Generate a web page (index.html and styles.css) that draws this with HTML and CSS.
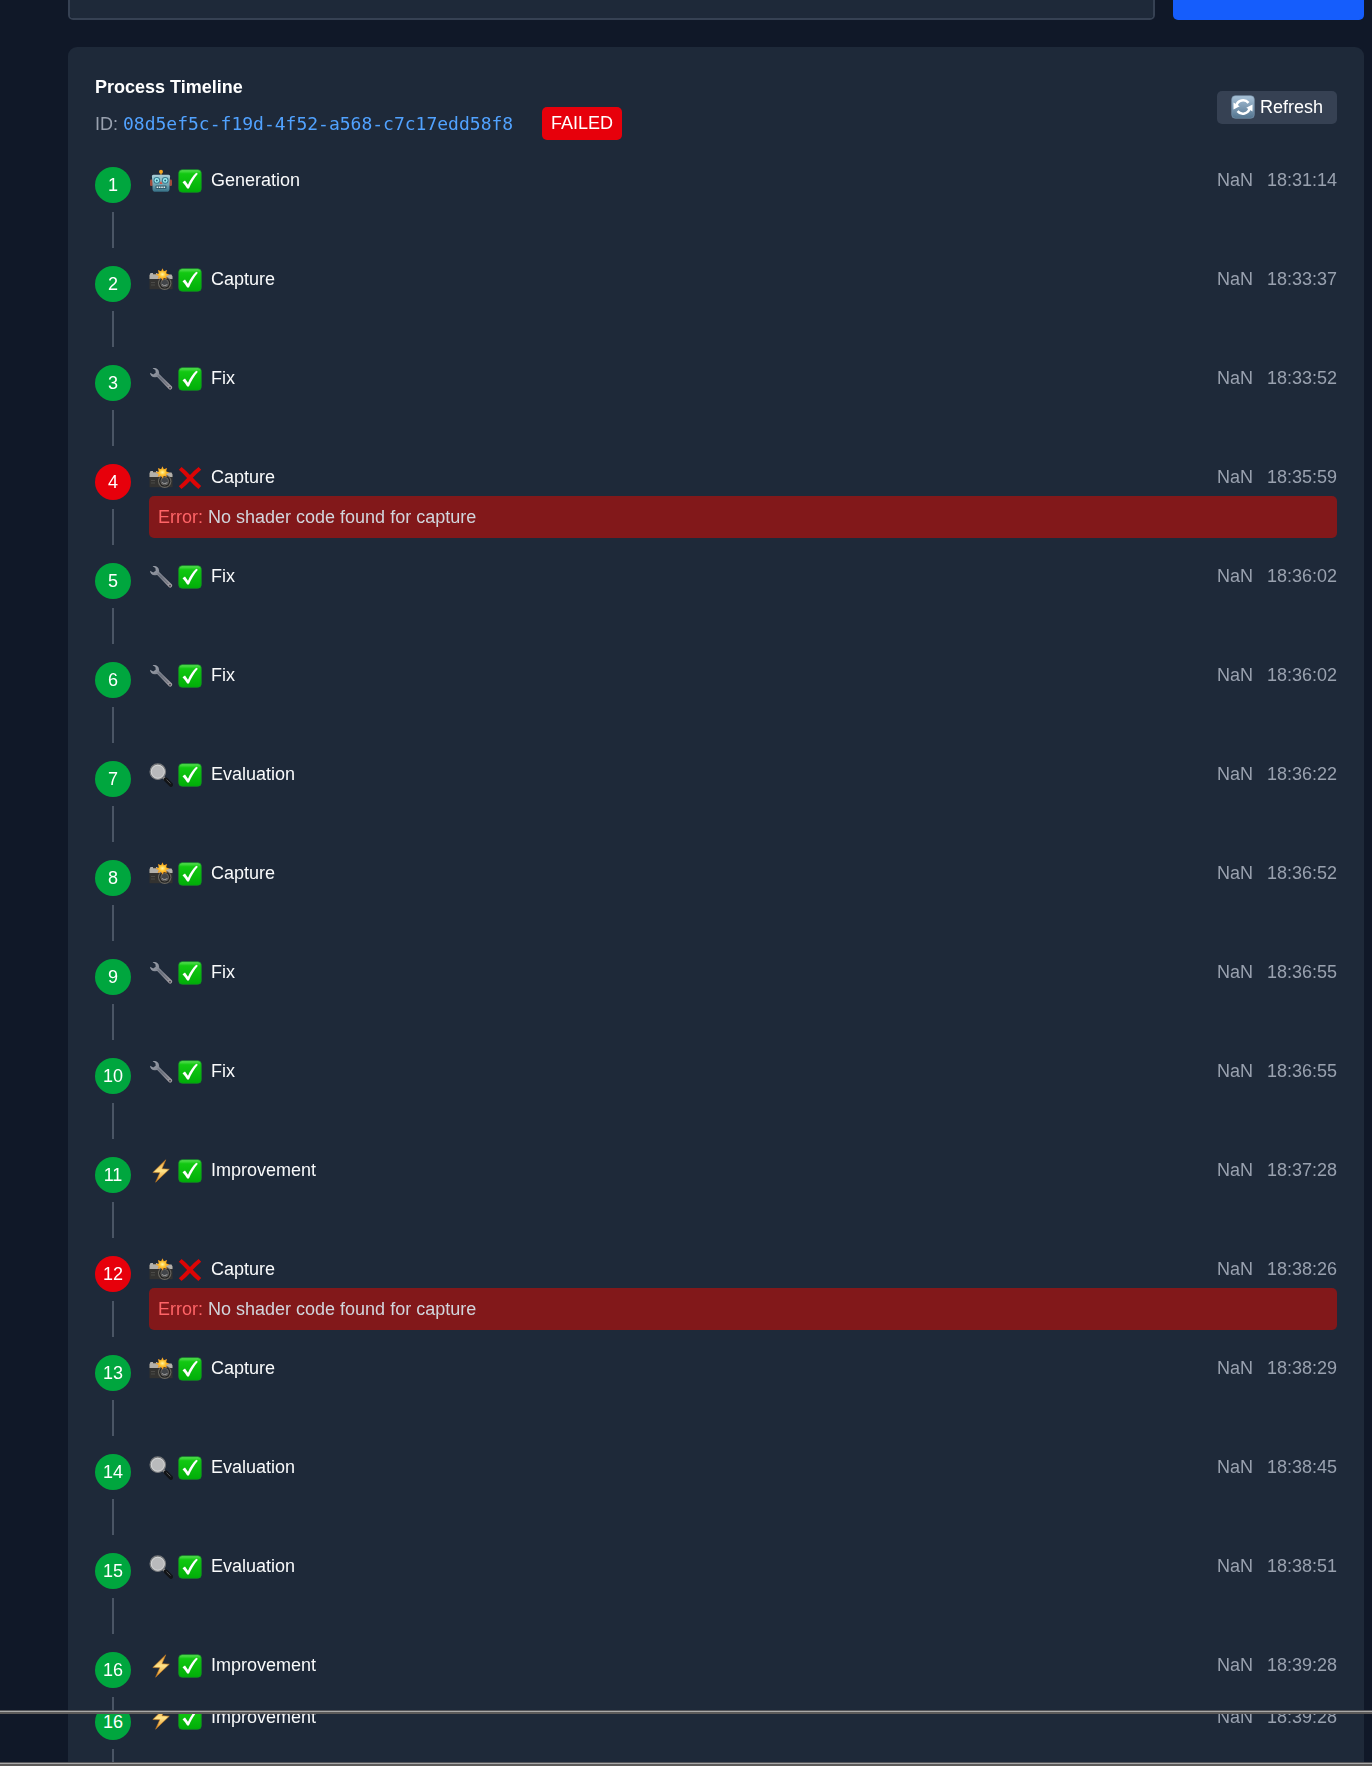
FILE: index.html
```html
<!DOCTYPE html>
<html lang="en">
<head>
<meta charset="utf-8">
<meta name="viewport" content="width=device-width, initial-scale=1">
<title>Process Timeline</title>
<link rel="stylesheet" href="styles.css">
</head>
<body>
<svg class="sprite" aria-hidden="true">
  <defs>
    <linearGradient id="g-green" x2="0" y2="1"><stop offset="0" stop-color="#5fe35a"/><stop offset=".18" stop-color="#12c812"/><stop offset="1" stop-color="#00ae08"/></linearGradient>
    <linearGradient id="g-blue" x2="0" y2="1"><stop offset="0" stop-color="#a9c2d8"/><stop offset="1" stop-color="#53748f"/></linearGradient>
    <linearGradient id="g-face" x2="0" y2="1"><stop offset="0" stop-color="#a9cdd6"/><stop offset=".6" stop-color="#6ea3b1"/><stop offset="1" stop-color="#356f85"/></linearGradient>
    <linearGradient id="g-bolt" x2="0" y2="1"><stop offset="0" stop-color="#f09a2c"/><stop offset=".5" stop-color="#ffe48a"/><stop offset="1" stop-color="#e58a1c"/></linearGradient>
    <linearGradient id="g-steel" x2="1" y2="1"><stop offset="0" stop-color="#a3a8b2"/><stop offset=".5" stop-color="#777c88"/><stop offset="1" stop-color="#a9a3a8"/></linearGradient>
    <radialGradient id="g-flash"><stop offset="0" stop-color="#fff3a0"/><stop offset=".45" stop-color="#ffc42e"/><stop offset="1" stop-color="#f08a18"/></radialGradient>
  </defs>
  <symbol id="check" viewBox="0 0 24 24">
    <rect x=".7" y=".7" width="22.6" height="22.6" rx="3.6" fill="url(#g-green)" stroke="#129325" stroke-width=".7"/>
    <path d="M4.5 13.2 7 11.5l3 4.2C12 11 14.800 7 18.200 3.800l1.700.9C16.200 9 13.200 13.800 10.900 19.600H9.200C7.900 17.200 6.300 15.100 4.500 13.200z" fill="#fff"/>
  </symbol>
  <symbol id="cross" viewBox="0 0 24 24">
    <path d="M.9 3.700 3.600 1C6.500 3.300 9.300 6 12 8.900 14.700 6 17.500 3.300 20.600 1l2.600 2.700c-3.100 2.500-5.900 5.200-8.400 8.100 2.700 2.800 5.500 5.600 8.400 8.300L20.400 23c-2.900-2.500-5.700-5.200-8.400-8.100-2.700 2.900-5.500 5.600-8.500 8.100L.8 20.200c2.900-2.600 5.700-5.400 8.300-8.300C6.500 9 3.800 6.300.9 3.700z" fill="#dc0505"/>
  </symbol>
  <symbol id="robot" viewBox="0 0 24 24">
    <path d="M12 3v4" stroke="#9c7a3b" stroke-width="1.600"/><circle cx="12" cy="2.700" r="2" fill="#f5a623"/>
    <rect x="1" y="10.500" width="3" height="6.500" rx="1.300" fill="#a34b3c"/><rect x="20" y="10.500" width="3" height="6.500" rx="1.300" fill="#a34b3c"/>
    <path d="M4.500 5.800h15c1 0 1.700.8 1.600 1.800l-.6 7v5.600c0 1.500-1 2.600-2.500 2.600H6c-1.500 0-2.500-1.100-2.500-2.600v-5.600l-.6-7c-.1-1 .6-1.800 1.600-1.800z" fill="url(#g-face)"/>
    <circle cx="7.800" cy="11.400" r="3.300" fill="#38798e"/><circle cx="16.200" cy="11.400" r="3.300" fill="#38798e"/>
    <circle cx="7.800" cy="11.400" r="2.300" fill="#9cf0f7"/><circle cx="16.200" cy="11.400" r="2.300" fill="#9cf0f7"/>
    <circle cx="7.800" cy="11.400" r="1" fill="#265c70"/><circle cx="16.200" cy="11.400" r="1" fill="#265c70"/>
    <path d="m12 12 1.600 3h-3.200z" fill="#d65442"/>
    <rect x="6.500" y="16.500" width="11" height="3.600" rx=".8" fill="#315d6d"/><path d="M7.600 18.300h8.800" stroke="#dbe8ea" stroke-width="1.600" stroke-dasharray="1.600 .7"/>
  </symbol>
  <symbol id="camera" viewBox="0 0 24 24">
    <path d="M.5 7.500 2 5h5l1 1.500h14l1.500 1.500v13.200H.5z" fill="#333230"/>
    <path d="M.5 7.200 1.500 5H4v1.200h3V5h1.500v1.500h14l1 2v2.500H.5z" fill="#b3b0aa"/>
    <path d="M2 14.500h4M2 17h4" stroke="#4b4a47" stroke-width="1"/>
    <circle cx="15.700" cy="15.200" r="6.700" fill="#68665f"/><circle cx="15.700" cy="15.200" r="5.600" fill="#252525"/>
    <circle cx="15.700" cy="15.200" r="3.900" fill="#414448" stroke="#77736b" stroke-width=".7"/><path d="M13 16.500c1.500 1.300 3.800 1.300 5.300 0" stroke="#a7a7a7" fill="none"/>
    <path d="m13.500.3 1.300 3 3.300-1.200-1 3.200 3.300 1.500-3.300 1.300.8 3-3-1.200-1.500 2.500-1.500-2.600-3.200 1.200 1-3-3.200-1.300L9.800 5.400 8.900 2.100l3.200 1.200z" fill="url(#g-flash)"/>
  </symbol>
  <symbol id="wrench" viewBox="0 0 24 24">
    <path d="M1 5.800 4.200 7.400 6.700 5.800 6.400 3 3.600 1.200C6.800.3 9.900 2.200 10.100 5.400l.1 1.600 12.500 12.300c1.600 1.700-.9 4.500-2.700 3L8.200 10.100 6.200 10.300C3.300 10.500 1.100 8.600 1 5.800z" fill="url(#g-steel)"/>
    <path d="m9 8.500 10.500 10.600" stroke="#5e6370" stroke-width="1"/><circle cx="21" cy="20.700" r=".9" fill="#403c43"/>
  </symbol>
  <symbol id="lens" viewBox="0 0 24 24">
    <path d="m14 14 3.500 3.500" stroke="#8e8e8e" stroke-width="2.600"/><path d="m16.800 16.600 5.200 5.200" stroke="#121417" stroke-width="4.200" stroke-linecap="round"/><path d="m17.500 16.600 4 3.900" stroke="#555" stroke-width="1"/>
    <circle cx="8.800" cy="8.700" r="7.700" fill="#b9babc" stroke="#77797c" stroke-width="1.300"/><circle cx="8.800" cy="8.700" r="6.500" fill="none" stroke="#d9dadb" stroke-width=".8"/>
  </symbol>
  <symbol id="bolt" viewBox="0 0 24 24">
    <path d="M16.800.8 3.800 13.500l7 .3L6.600 23.200 20.300 10.200l-7.300-.5z" fill="url(#g-bolt)" stroke="#c17a22" stroke-width=".6"/>
  </symbol>
  <symbol id="refresh" viewBox="0 0 24 24">
    <rect x=".7" y=".7" width="22.600" height="22.600" rx="3.600" fill="url(#g-blue)" stroke="#7e99b0" stroke-width=".6"/>
    <path d="M5.300 10.700A7 7 0 0 1 17.500 7.900M18.700 13.300A7 7 0 0 1 6.500 16.100" fill="none" stroke="#fff" stroke-width="2.500"/>
    <path d="M2.500 7.500v7l6.200-3.200zM21.500 16.500v-7l-6.200 3.200z" fill="#fff"/>
  </symbol>
</svg>

<main class="pane">
  <form class="prompt">
    <textarea class="prompt-text" aria-label="Prompt"></textarea>
    <button class="prompt-submit" type="button" aria-label="Generate"></button>
  </form>
  <section class="card">
    <header class="card-head">
      <div class="heading">
        <h1 class="title">Process Timeline</h1>
        <div class="meta"><div class="process">ID: <a class="process-id" href="#process">08d5ef5c-f19d-4f52-a568-c7c17edd58f8</a></div><span class="badge">FAILED</span></div>
      </div>
      <button class="refresh" type="button"><svg class="icon"><use href="#refresh"/></svg>Refresh</button>
    </header>
    <ol class="steps">
      <li class="step"><div class="rail"><span class="num">1</span></div><div class="body"><div class="row"><svg class="icon"><use href="#robot"/></svg><svg class="icon"><use href="#check"/></svg><span class="name">Generation</span><span>NaN</span><time>18:31:14</time></div></div></li>
      <li class="step"><div class="rail"><span class="num">2</span></div><div class="body"><div class="row"><svg class="icon"><use href="#camera"/></svg><svg class="icon"><use href="#check"/></svg><span class="name">Capture</span><span>NaN</span><time>18:33:37</time></div></div></li>
      <li class="step"><div class="rail"><span class="num">3</span></div><div class="body"><div class="row"><svg class="icon"><use href="#wrench"/></svg><svg class="icon"><use href="#check"/></svg><span class="name">Fix</span><span>NaN</span><time>18:33:52</time></div></div></li>
      <li class="step"><div class="rail"><span class="num num-failed">4</span></div><div class="body"><div class="row"><svg class="icon"><use href="#camera"/></svg><svg class="icon"><use href="#cross"/></svg><span class="name">Capture</span><span>NaN</span><time>18:35:59</time></div><p class="error"><span class="error-label">Error:</span> No shader code found for capture</p></div></li>
      <li class="step"><div class="rail"><span class="num">5</span></div><div class="body"><div class="row"><svg class="icon"><use href="#wrench"/></svg><svg class="icon"><use href="#check"/></svg><span class="name">Fix</span><span>NaN</span><time>18:36:02</time></div></div></li>
      <li class="step"><div class="rail"><span class="num">6</span></div><div class="body"><div class="row"><svg class="icon"><use href="#wrench"/></svg><svg class="icon"><use href="#check"/></svg><span class="name">Fix</span><span>NaN</span><time>18:36:02</time></div></div></li>
      <li class="step"><div class="rail"><span class="num">7</span></div><div class="body"><div class="row"><svg class="icon"><use href="#lens"/></svg><svg class="icon"><use href="#check"/></svg><span class="name">Evaluation</span><span>NaN</span><time>18:36:22</time></div></div></li>
      <li class="step"><div class="rail"><span class="num">8</span></div><div class="body"><div class="row"><svg class="icon"><use href="#camera"/></svg><svg class="icon"><use href="#check"/></svg><span class="name">Capture</span><span>NaN</span><time>18:36:52</time></div></div></li>
      <li class="step"><div class="rail"><span class="num">9</span></div><div class="body"><div class="row"><svg class="icon"><use href="#wrench"/></svg><svg class="icon"><use href="#check"/></svg><span class="name">Fix</span><span>NaN</span><time>18:36:55</time></div></div></li>
      <li class="step"><div class="rail"><span class="num">10</span></div><div class="body"><div class="row"><svg class="icon"><use href="#wrench"/></svg><svg class="icon"><use href="#check"/></svg><span class="name">Fix</span><span>NaN</span><time>18:36:55</time></div></div></li>
      <li class="step"><div class="rail"><span class="num">11</span></div><div class="body"><div class="row"><svg class="icon"><use href="#bolt"/></svg><svg class="icon"><use href="#check"/></svg><span class="name">Improvement</span><span>NaN</span><time>18:37:28</time></div></div></li>
      <li class="step"><div class="rail"><span class="num num-failed">12</span></div><div class="body"><div class="row"><svg class="icon"><use href="#camera"/></svg><svg class="icon"><use href="#cross"/></svg><span class="name">Capture</span><span>NaN</span><time>18:38:26</time></div><p class="error"><span class="error-label">Error:</span> No shader code found for capture</p></div></li>
      <li class="step"><div class="rail"><span class="num">13</span></div><div class="body"><div class="row"><svg class="icon"><use href="#camera"/></svg><svg class="icon"><use href="#check"/></svg><span class="name">Capture</span><span>NaN</span><time>18:38:29</time></div></div></li>
      <li class="step"><div class="rail"><span class="num">14</span></div><div class="body"><div class="row"><svg class="icon"><use href="#lens"/></svg><svg class="icon"><use href="#check"/></svg><span class="name">Evaluation</span><span>NaN</span><time>18:38:45</time></div></div></li>
      <li class="step"><div class="rail"><span class="num">15</span></div><div class="body"><div class="row"><svg class="icon"><use href="#lens"/></svg><svg class="icon"><use href="#check"/></svg><span class="name">Evaluation</span><span>NaN</span><time>18:38:51</time></div></div></li>
      <li class="step"><div class="rail"><span class="num">16</span></div><div class="body"><div class="row"><svg class="icon"><use href="#bolt"/></svg><svg class="icon"><use href="#check"/></svg><span class="name">Improvement</span><span>NaN</span><time>18:39:28</time></div></div></li>
    </ol>
  </section>
</main>
<div class="divider"></div>
<section class="pane pane-tail">
  <div class="card card-tail">
    <ol class="steps" start="16">
      <li class="step"><div class="rail"><span class="num">16</span></div><div class="body"><div class="row"><svg class="icon"><use href="#bolt"/></svg><svg class="icon"><use href="#check"/></svg><span class="name">Improvement</span><span>NaN</span><time>18:39:28</time></div></div></li>
    </ol>
  </div>
</section>
<div class="divider"></div>
</body>
</html>
```
FILE: styles.css
```css
* { box-sizing: border-box; }

body {
  margin: 0;
  height: 100vh;
  display: grid;
  grid-template-rows: minmax(0, 1fr) 4px 48px 4px;
  background: #101828;
  color: #f9fafb;
  font: 18px/27px "Liberation Sans", Arial, sans-serif;
}

.sprite { position: absolute; width: 0; height: 0; }

.pane { overflow: hidden; padding: 0 8px 0 68px; }

.divider {
  background: #a9a9a9;
  border-top: 1px solid #55565a;
  border-bottom: 2px solid #5c5a59;
}

.prompt { display: flex; gap: 18px; height: 40px; margin-top: -20px; }

.prompt-text {
  flex: 1;
  padding: 8px;
  border: 2px solid #364153;
  border-radius: 5px;
  background: #1e2939;
  color: inherit;
  font: inherit;
  resize: none;
}

.prompt-submit {
  width: 191px;
  border: 0;
  border-radius: 5px;
  background: #155dfc;
}

.card {
  margin-top: 27px;
  padding: 27px;
  border-radius: 9px;
  background: #1e2939;
}

.card-tail { margin-top: -10px; padding-top: 0; border-radius: 0; }

.card-head {
  display: flex;
  align-items: center;
  justify-content: space-between;
  margin-bottom: 27px;
}

.heading { display: flex; flex-direction: column; gap: 6px; }

.title { margin: 0; color: #fff; font-size: 18px; font-weight: 700; }

.meta { display: flex; align-items: center; gap: 18px; color: #99a1af; }

.process { min-width: 429px; }

.process-id {
  color: #51a2ff;
  font-family: "DejaVu Sans Mono", monospace;
  text-decoration: none;
}

.badge {
  padding: 3px 9px;
  border-radius: 5px;
  background: #e7000b;
  color: #fff;
}

.refresh {
  display: flex;
  align-items: center;
  gap: 5px;
  padding: 3px 14px;
  border: 0;
  border-radius: 5px;
  background: #364153;
  color: #fff;
  font: inherit;
}

.icon { flex: none; width: 24px; height: 24px; }

.steps { margin: 0; padding: 0; list-style: none; }

.step { display: flex; gap: 18px; min-height: 99px; }

.rail {
  display: flex;
  flex-direction: column;
  align-items: center;
  gap: 9px;
}

.rail::after { content: ""; width: 2px; height: 36px; background: #4a5565; }

.num {
  width: 36px;
  height: 36px;
  border-radius: 50%;
  background: #00a63e;
  color: #fff;
  line-height: 36px;
  text-align: center;
}

.num-failed { background: #e7000b; }

.body { flex: 1; }

.row { display: flex; align-items: center; gap: 5px; color: #99a1af; }

.name { flex: 1; padding-left: 4px; color: #f9fafb; }

.row time { padding-left: 9px; }

.error {
  margin: 5px 0 0;
  padding: 8px 9px 7px;
  border-radius: 5px;
  background: #82181a;
  color: #d1d5dc;
}

.error-label { color: #ff6467; }
```
